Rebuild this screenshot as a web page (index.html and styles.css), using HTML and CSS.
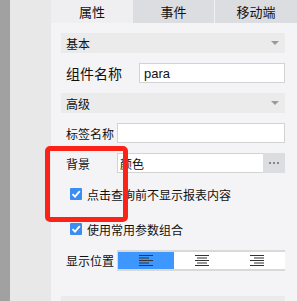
FILE: index.html
```html
<!DOCTYPE html>
<html lang="zh-CN">
<head>
    <meta charset="UTF-8">
    <title>属性面板</title>
    <link rel="stylesheet" href="styles.css">
</head>
<body>
    <div class="rail"></div>
    <div class="side"></div>
    <div class="panel">
        <div class="tabs">
            <div class="tab active">属性</div>
            <div class="tab">事件</div>
            <div class="tab last">移动端</div>
        </div>

        <div class="content">
            <div class="section">
                <span>基本</span>
                <span class="arrow"></span>
            </div>

            <div class="row">
                <label class="wide">组件名称</label>
                <input type="text" value="para">
            </div>

            <div class="section">
                <span>高级</span>
                <span class="arrow"></span>
            </div>

            <div class="row">
                <label>标签名称</label>
                <input type="text" value="">
            </div>

            <div class="row">
                <label>背景</label>
                <div class="picker">
                    <span class="picker-text">颜色</span>
                    <span class="more"><i></i><i></i><i></i></span>
                </div>
            </div>

            <div class="check first">
                <span class="box">
                    <svg width="12" height="12" viewBox="0 0 12 12"><path d="M2.5 6.2 L5 8.7 L9.8 3.2" fill="none" stroke="#fff" stroke-width="1.8"/></svg>
                </span>
                <span>点击查询前不显示报表内容</span>
            </div>

            <div class="check second">
                <span class="box">
                    <svg width="12" height="12" viewBox="0 0 12 12"><path d="M2.5 6.2 L5 8.7 L9.8 3.2" fill="none" stroke="#fff" stroke-width="1.8"/></svg>
                </span>
                <span>使用常用参数组合</span>
            </div>

            <div class="row seg-row">
                <label>显示位置</label>
                <div class="seg">
                    <div class="seg-item on">
                        <svg width="14" height="11" viewBox="0 0 14 11"><rect x="0" y="0" width="14" height="1"/><rect x="0" y="2.5" width="10" height="1"/><rect x="0" y="5" width="14" height="1"/><rect x="0" y="7.5" width="10" height="1"/><rect x="0" y="10" width="14" height="1"/></svg>
                    </div>
                    <div class="seg-item">
                        <svg width="14" height="11" viewBox="0 0 14 11"><rect x="0" y="0" width="14" height="1"/><rect x="2" y="2.5" width="10" height="1"/><rect x="0" y="5" width="14" height="1"/><rect x="2" y="7.5" width="10" height="1"/><rect x="0" y="10" width="14" height="1"/></svg>
                    </div>
                    <div class="seg-item">
                        <svg width="14" height="11" viewBox="0 0 14 11"><rect x="0" y="0" width="14" height="1"/><rect x="4" y="2.5" width="10" height="1"/><rect x="0" y="5" width="14" height="1"/><rect x="4" y="7.5" width="10" height="1"/><rect x="0" y="10" width="14" height="1"/></svg>
                    </div>
                </div>
            </div>

            <div class="section last-section">
                <span>显示</span>
            </div>
        </div>
    </div>

    <!-- marca vermelha por cima -->
    <div class="mark"></div>
</body>
</html>
```

FILE: styles.css
```css
/* base */
body {
    margin: 0;
    height: 301px;
    overflow: hidden;
    display: flex;
    font-family: "Noto Sans CJK SC", "Liberation Sans", sans-serif;
    font-size: 12px;
    color: #111;
    position: relative;
}

.rail {
    width: 10px;
    flex: none;
    background: #a1a1a1;
}

.side {
    width: 41px;
    flex: none;
    background: #e8e8e8;
}

.panel {
    flex: 1;
    min-width: 0;
    background: #f4f4f6;
}

/* abas */
.tabs {
    display: flex;
    height: 23px;
    background: #dcdde0;
}

.tab {
    width: 81px;
    flex: none;
    line-height: 23px;
    text-align: center;
    font-size: 13px;
}

.tab.active {
    width: 82px;
    background: #efeff1;
}

.tab.last {
    flex: 1;
    border-left: 1px solid #f0f0f2;
}

/* conteudo */
.content {
    padding: 10px 12px 0 10px;
    display: flex;
    flex-direction: column;
}

.section {
    height: 20px;
    flex: none;
    background: #ebebeb;
    display: flex;
    align-items: center;
    justify-content: space-between;
    padding: 0 6px 0 5px;
    margin-bottom: 10px;
}

.arrow {
    width: 0;
    height: 0;
    border-left: 4px solid transparent;
    border-right: 4px solid transparent;
    border-top: 4px solid #9a9a9a;
}

.row {
    height: 20px;
    flex: none;
    display: flex;
    align-items: center;
    padding-left: 5px;
    margin-bottom: 10px;
}

.row label {
    width: 51px;
    flex: none;
}

.row label.wide {
    width: 73px;
    font-size: 14px;
}

.row input {
    flex: 1;
    min-width: 0;
    width: 0;
    height: 20px;
    box-sizing: border-box;
    border: 1px solid #d3d3d3;
    background: #fff;
    padding: 0 4px;
    font-family: "Liberation Sans", sans-serif;
    font-size: 13px;
    color: #111;
    outline: none;
}

.picker {
    flex: 1;
    min-width: 0;
    height: 20px;
    box-sizing: border-box;
    border: 1px solid #d3d3d3;
    border-right: none;
    background: #fff;
    display: flex;
    align-items: center;
}

.picker-text {
    flex: 1;
    padding-left: 2px;
}

.more {
    width: 22px;
    height: 20px;
    background: #dcdde0;
    display: flex;
    align-items: center;
    justify-content: center;
    gap: 2px;
}

.more i {
    width: 2px;
    height: 2px;
    background: #888;
}

/* checkboxes */
.check {
    height: 20px;
    flex: none;
    display: flex;
    align-items: center;
    gap: 5px;
    padding-left: 9px;
}

.check.first {
    margin-top: 1px;
}

.check.second {
    margin-top: 15px;
}

.box {
    width: 12px;
    height: 12px;
    border-radius: 1px;
    background: #3b8ef0;
    display: flex;
}

/* posicao */
.seg-row {
    margin-top: 11px;
    margin-bottom: 26px;
}

.seg {
    flex: 1;
    height: 21px;
    box-sizing: border-box;
    display: flex;
    background: #fff;
    border-top: 2px solid #d9d9d9;
    border-bottom: 2px solid #d9d9d9;
    border-left: 1px solid #d9d9d9;
}

.seg-item {
    flex: 1;
    display: flex;
    align-items: center;
    justify-content: center;
    fill: #333;
}

.seg-item.on {
    background: #3d97fe;
}

.last-section {
    padding-left: 6px;
}

/* marca vermelha */
.mark {
    position: absolute;
    left: 45px;
    top: 146px;
    width: 83px;
    height: 76px;
    box-sizing: border-box;
    border: 5px solid #fb2318;
    border-radius: 5px;
}
```
